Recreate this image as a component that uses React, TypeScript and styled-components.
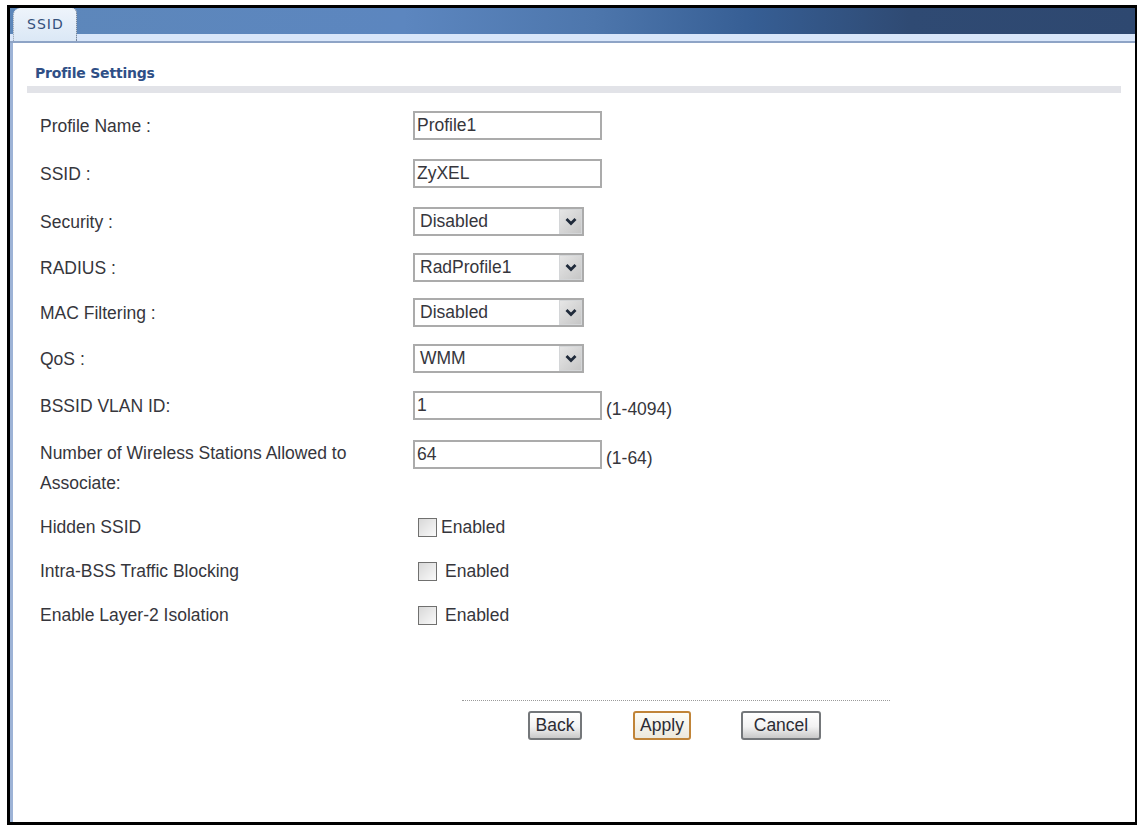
import React from "react";
import styled, { createGlobalStyle } from "styled-components";

const GlobalStyle = createGlobalStyle`
  html, body {
    margin: 0;
    padding: 0;
    background: #fff;
  }
`;

const Page = styled.div`
  box-sizing: border-box;
  width: 1143px;
  height: 828px;
  padding: 5px 6px 3px 7px;
  font-family: "Liberation Sans", Arial, sans-serif;
  font-size: 17.5px;
  color: #36363c;
`;

const Frame = styled.div`
  box-sizing: border-box;
  height: 100%;
  border-style: solid;
  border-color: #000;
  border-width: 3px 2px 3px 3px;
  display: flex;
  flex-direction: column;
  background: #fff;
`;

const TabBar = styled.div`
  display: flex;
  height: 35px;
  flex: none;
  box-sizing: border-box;
  border-bottom: 2px solid #8ea4c6;
  background:
    linear-gradient(#d8e6fa, #d8e6fa) bottom / 100% 7px no-repeat,
    linear-gradient(90deg, #5d87ba 0, #5c86bf 35%, #4d76ac 52%, #365e94 66%, #2f4a73 80%, #2e4870 100%);
`;

const Tab = styled.div`
  box-sizing: border-box;
  width: 64px;
  height: 33px;
  margin-left: 3px;
  padding: 8px 0 0 13px;
  border-top-left-radius: 7px;
  border-top-right-radius: 5px;
  border-right: 1px dotted #54657e;
  border-left: 1px dotted #8c98a8;
  background: linear-gradient(#eef4fb, #dbe8f6);
  font-family: "DejaVu Sans", Verdana, sans-serif;
  font-size: 14px;
  letter-spacing: 1px;
  color: #34507c;
`;

const Body = styled.div`
  flex: 1;
  border-left: 3px solid #9db3d6;
  padding: 21px 14px 0 14px;
`;

const SectionTitle = styled.div`
  padding: 0 0 4px 8px;
  font-family: "DejaVu Sans", Verdana, sans-serif;
  font-size: 14px;
  line-height: 18px;
  font-weight: 700;
  letter-spacing: -0.2px;
  color: #2f4f86;
  border-bottom: 7px solid #e2e3e8;
`;

const Form = styled.div`
  display: flex;
  flex-direction: column;
  padding: 8px 0 0 13px;
`;

const Row = styled.div<{ $h: number }>`
  display: grid;
  grid-template-columns: 373px 1fr;
  box-sizing: border-box;
  height: ${(p) => p.$h}px;
  align-items: center;
`;

const TallRow = styled(Row)`
  align-items: start;
  padding-top: 8px;
`;

const Label = styled.div`
  line-height: 30px;
`;

const Field = styled.div`
  display: flex;
  align-items: center;
`;

const TallField = styled(Field)`
  margin-top: 2px;
`;

const TextInput = styled.input`
  box-sizing: border-box;
  width: 189px;
  height: 29px;
  border: 2px solid #ababab;
  outline: none;
  padding: 0 2px;
  font: inherit;
  color: inherit;
  background: #fff;
`;

const Hint = styled.span`
  margin-left: 4px;
  margin-top: 7px;
`;

const SelectBox = styled.div`
  box-sizing: border-box;
  width: 171px;
  height: 29px;
  border: 2px solid #ababab;
  display: flex;
  align-items: center;
  justify-content: space-between;
  padding-left: 5px;
`;

const Arrow = styled.div`
  box-sizing: border-box;
  width: 23px;
  height: 25px;
  display: flex;
  align-items: center;
  justify-content: center;
  border: 1px solid #d4d6d8;
  background: linear-gradient(135deg, #e6e6e6, #c6c6c6);
`;

const Check = styled.span`
  box-sizing: border-box;
  width: 19px;
  height: 19px;
  flex: none;
  border: 1px solid #70706f;
  background: linear-gradient(135deg, #d8d8d8, #fafafa);
`;

const CheckText = styled.span<{ $gap: number }>`
  margin-left: ${(p) => p.$gap}px;
`;

const CheckField = styled(Field)`
  padding-left: 5px;
`;

const Actions = styled.div`
  box-sizing: border-box;
  margin: 63px 0 0 435px;
  width: 428px;
  border-top: 1px dotted #9a9a9a;
  padding: 10px 0 0 66px;
  display: flex;
`;

const Button = styled.button<{ $w: number; $gap: number; $primary?: boolean }>`
  box-sizing: border-box;
  width: ${(p) => p.$w}px;
  height: 29px;
  margin-right: ${(p) => p.$gap}px;
  padding: 0;
  border: 2px solid ${(p) => (p.$primary ? "#c08438" : "#74777a")};
  border-radius: 3px;
  background: ${(p) =>
    p.$primary
      ? "linear-gradient(#fdfdf8, #ece8dc)"
      : "linear-gradient(#ffffff, #f2f2f2 55%, #c9c9c9)"};
  font: inherit;
  color: #2c2c34;
`;

const ChevronDown = () => (
  <svg width="14" height="10" viewBox="0 0 14 10">
    <path d="M2.5 2 L7 6.5 L11.5 2" fill="none" stroke="#1f2a3a" strokeWidth="2.8" />
  </svg>
);

const Select = ({ value }: { value: string }) => (
  <SelectBox>
    <span>{value}</span>
    <Arrow>
      <ChevronDown />
    </Arrow>
  </SelectBox>
);

export default function App() {
  return (
    <Page>
      <GlobalStyle />
      <Frame>
        <TabBar>
          <Tab>SSID</Tab>
        </TabBar>
        <Body>
          <SectionTitle>Profile Settings</SectionTitle>
          <Form>
            <Row $h={49}>
              <Label>Profile Name :</Label>
              <Field>
                <TextInput defaultValue="Profile1" />
              </Field>
            </Row>
            <Row $h={47}>
              <Label>SSID :</Label>
              <Field>
                <TextInput defaultValue="ZyXEL" />
              </Field>
            </Row>
            <Row $h={49}>
              <Label>Security :</Label>
              <Select value="Disabled" />
            </Row>
            <Row $h={43}>
              <Label>RADIUS :</Label>
              <Select value="RadProfile1" />
            </Row>
            <Row $h={47}>
              <Label>MAC Filtering :</Label>
              <Select value="Disabled" />
            </Row>
            <Row $h={45}>
              <Label>QoS :</Label>
              <Select value="WMM" />
            </Row>
            <Row $h={49}>
              <Label>BSSID VLAN ID:</Label>
              <Field>
                <TextInput defaultValue="1" />
                <Hint>(1-4094)</Hint>
              </Field>
            </Row>
            <TallRow $h={75}>
              <Label>
                Number of Wireless Stations Allowed to
                <br />
                Associate:
              </Label>
              <TallField>
                <TextInput defaultValue="64" />
                <Hint>(1-64)</Hint>
              </TallField>
            </TallRow>
            <Row $h={44}>
              <Label>Hidden SSID</Label>
              <CheckField>
                <Check />
                <CheckText $gap={4}>Enabled</CheckText>
              </CheckField>
            </Row>
            <Row $h={44}>
              <Label>Intra-BSS Traffic Blocking</Label>
              <CheckField>
                <Check />
                <CheckText $gap={8}>Enabled</CheckText>
              </CheckField>
            </Row>
            <Row $h={44}>
              <Label>Enable Layer-2 Isolation</Label>
              <CheckField>
                <Check />
                <CheckText $gap={8}>Enabled</CheckText>
              </CheckField>
            </Row>
          </Form>
          <Actions>
            <Button $w={54} $gap={51}>Back</Button>
            <Button $w={58} $gap={50} $primary>Apply</Button>
            <Button $w={80} $gap={0}>Cancel</Button>
          </Actions>
        </Body>
      </Frame>
    </Page>
  );
}
